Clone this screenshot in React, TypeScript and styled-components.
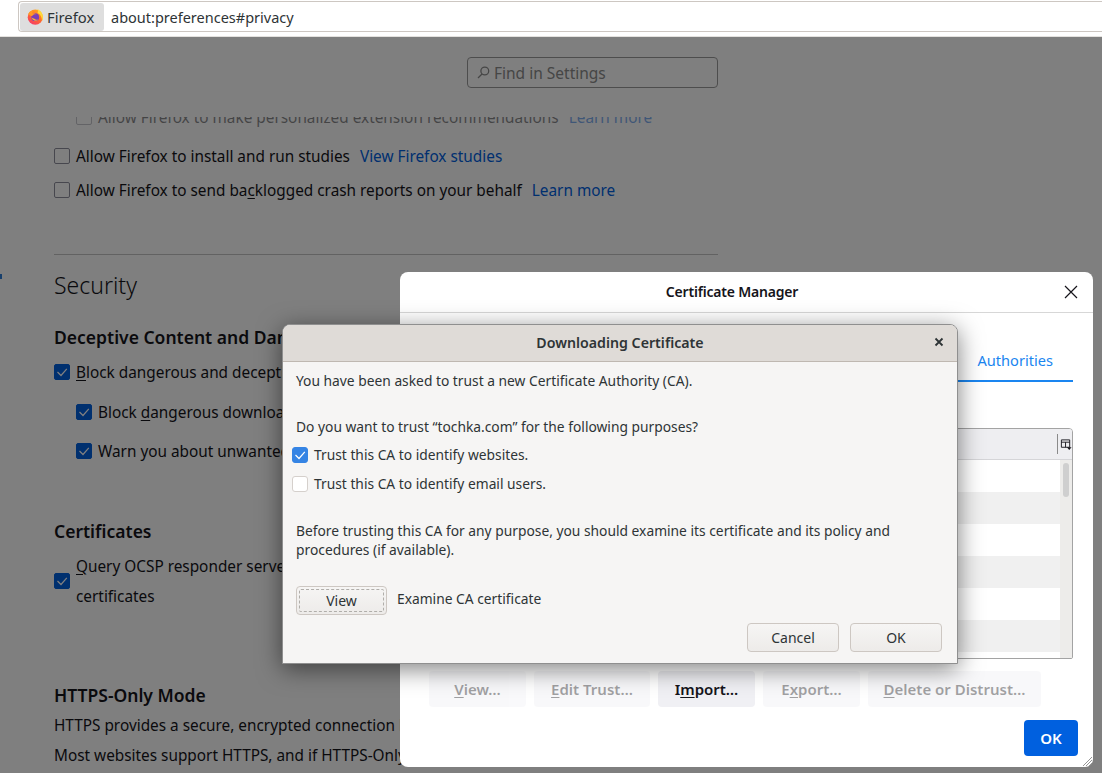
import React from "react";
import styled, { createGlobalStyle } from "styled-components";

const FONT = `"Noto Sans", "Open Sans", sans-serif`;

const Global = createGlobalStyle`
  html, body { margin: 0; padding: 0; width: 1102px; height: 773px; overflow: hidden; background: #fff; }
  body { font-family: ${FONT}; }
  * { box-sizing: border-box; }
`;

const Screen = styled.div`
  position: relative;
  width: 1102px;
  height: 773px;
  display: flex;
  flex-direction: column;
  overflow: hidden;
`;

/* ---------- address bar ---------- */
const UrlBar = styled.header`
  height: 37px;
  flex: none;
  padding: 1px 0 0 18px;
  background: #fff;
  border-bottom: 1px solid #e4e2df;
`;
const UrlField = styled.div`
  height: 31px;
  display: flex;
  align-items: center;
  gap: 7px;
  padding-left: 1px;
  border: 1px solid #cdc7c2;
  border-right: none;
  border-radius: 4px 0 0 4px;
`;
const Identity = styled.div`
  width: 84px;
  height: 28px;
  display: flex;
  align-items: center;
  gap: 3px;
  padding-left: 7px;
  border-radius: 3px;
  background: #dedede;
  font-size: 14.8px;
  color: #2e3436;
`;
const UrlText = styled.span`
  font-size: 14.5px;
  color: #2e3436;
`;

/* ---------- preferences page ---------- */
const Page = styled.main`
  position: relative;
  flex: 1;
  min-height: 0;
  display: flex;
  flex-direction: column;
  padding-left: 54px;
  background: #fff;
  color: #15141a;
  font-size: 15.35px;
`;
const SearchRow = styled.div`
  width: 664px;
  height: 80px;
  flex: none;
  padding-top: 20px;
  display: flex;
  justify-content: flex-end;
`;
const SearchBox = styled.div`
  width: 251px;
  height: 31px;
  display: flex;
  align-items: center;
  gap: 4px;
  padding-left: 9px;
  border: 1px solid #9a9a9a;
  border-radius: 4px;
  color: #8c8c8c;
  font-size: 15.5px;
`;
const Scroller = styled.div`
  width: 664px;
  flex: 1;
  min-height: 0;
  overflow: hidden;
`;
const Row = styled.div<{ $top: number; $indent?: boolean; $dim?: boolean; $h?: number }>`
  display: flex;
  align-items: center;
  gap: 6px;
  height: ${(p) => p.$h ?? 24}px;
  margin-top: ${(p) => p.$top}px;
  padding-left: ${(p) => (p.$indent ? 22 : 0)}px;
  white-space: nowrap;
  line-height: 30px;
  opacity: ${(p) => (p.$dim ? 0.5 : 1)};
`;
const Box = styled.span<{ $on?: boolean }>`
  width: 16px;
  height: 16px;
  flex: none;
  display: inline-flex;
  border-radius: 2px;
  border: 1px solid ${(p) => (p.$on ? "#0060df" : "#8f8f9d")};
  background: ${(p) => (p.$on ? "#0060df" : "transparent")};
`;
const Link = styled.span`
  color: #0060df;
  margin-left: 4px;
`;
const Key = styled.span`
  text-decoration: underline;
  text-underline-offset: 2px;
`;
const Rule = styled.hr<{ $top: number }>`
  margin: ${(p) => p.$top}px 0 0;
  border: none;
  height: 1px;
  background: #c4c4c4;
`;
const SectionTitle = styled.h1<{ $top: number }>`
  margin: ${(p) => p.$top}px 0 0;
  height: 34px;
  line-height: 34px;
  font-size: 23px;
  font-weight: 300;
`;
const GroupTitle = styled.h2<{ $top: number }>`
  margin: ${(p) => p.$top}px 0 0;
  height: 24px;
  line-height: 24px;
  font-size: 17.5px;
  font-weight: 600;
  white-space: nowrap;
`;
const Sidebar = styled.i`
  position: absolute;
  left: 0;
  top: 237px;
  width: 2px;
  height: 5px;
  background: #2f7fd8;
`;
const Scrim = styled.div`
  position: absolute;
  inset: 0;
  background: rgba(0, 0, 0, 0.5);
`;

/* ---------- certificate manager ---------- */
const Manager = styled.section`
  position: absolute;
  left: 400px;
  top: 272px;
  width: 693px;
  height: 495px;
  display: flex;
  flex-direction: column;
  background: #fff;
  border-radius: 8px;
  color: #15141a;
  font-size: 15px;
`;
const ManagerHead = styled.div`
  position: relative;
  height: 41px;
  flex: none;
  display: flex;
  align-items: center;
  justify-content: center;
  padding: 0 29px 2px 0;
  border-bottom: 1px solid #d7d7d7;
  font-size: 14px;
  letter-spacing: -0.2px;
  font-weight: 600;
`;
const CloseButton = styled.span`
  position: absolute;
  right: 14px;
  top: 12px;
  display: flex;
`;
const ManagerBody = styled.div`
  flex: 1;
  display: flex;
  flex-direction: column;
  padding: 0 20px 0 29px;
`;
const Tabs = styled.div`
  margin-top: 27px;
  height: 42px;
  display: flex;
  justify-content: flex-end;
  border-bottom: 2px solid #1a85f0;
`;
const Tab = styled.div`
  padding: 0 20px;
  line-height: 40px;
  font-size: 14.6px;
  color: #1a85f0;
`;
const Table = styled.div`
  margin-top: 46px;
  height: 231px;
  display: flex;
  flex-direction: column;
  border: 1px solid #a3a3a3;
  border-radius: 4px 4px 2px 2px;
  overflow: hidden;
`;
const TableHead = styled.div`
  height: 31px;
  flex: none;
  display: flex;
  align-items: center;
  justify-content: flex-end;
  gap: 2px;
  background: #eeeef1;
  border-bottom: 1px solid #d5d5d8;
`;
const HeadDivider = styled.span`
  width: 1px;
  height: 20px;
  background: #8a8a8a;
`;
const TableBody = styled.div`
  flex: 1;
  min-height: 0;
  display: flex;
`;
const RowList = styled.div`
  flex: 1;
  overflow: hidden;
`;
const Stripe = styled.div<{ $even: boolean }>`
  height: 32px;
  background: ${(p) => (p.$even ? "#f0f0f0" : "#fff")};
`;
const Scrollbar = styled.div`
  width: 12px;
  flex: none;
  padding: 3px 3px;
  background: #edecea;
`;
const Thumb = styled.div`
  width: 6px;
  height: 34px;
  border-radius: 3px;
  background: #cfcfcf;
`;
const Actions = styled.div`
  margin-top: 12px;
  display: flex;
  gap: 8px;
`;
const ActionButton = styled.div<{ $w: number; $off?: boolean }>`
  width: ${(p) => p.$w}px;
  height: 36px;
  display: flex;
  align-items: center;
  justify-content: center;
  border-radius: 4px;
  background: #f0f0f4;
  font-size: 15px;
  font-weight: 600;
  opacity: ${(p) => (p.$off ? 0.4 : 1)};
`;
const ManagerFoot = styled.div`
  margin: 13px -5px 0 0;
  display: flex;
  justify-content: flex-end;
`;
const Primary = styled.div`
  width: 54px;
  height: 36px;
  display: flex;
  align-items: center;
  justify-content: center;
  border-radius: 4px;
  background: #0060df;
  color: #fff;
  font-size: 15px;
  font-weight: 600;
`;
const Resizer = styled.svg`
  position: absolute;
  right: 0;
  bottom: 0;
`;

/* ---------- GTK prompt ---------- */
const Prompt = styled.section`
  position: absolute;
  left: 282px;
  top: 324px;
  width: 676px;
  height: 340px;
  display: flex;
  flex-direction: column;
  background: #f6f5f4;
  border: 1px solid #8f8f8f;
  border-radius: 8px 8px 0 0;
  box-shadow: 0 5px 24px rgba(0, 0, 0, 0.5);
  color: #2e3436;
  font-size: 13.8px;
`;
const PromptHead = styled.div`
  position: relative;
  height: 37px;
  flex: none;
  display: flex;
  align-items: center;
  justify-content: center;
  padding-bottom: 2px;
  background: #dfdbd7;
  border-bottom: 1px solid #bfb8b1;
  border-radius: 7px 7px 0 0;
  font-weight: 600;
  font-size: 14.2px;
`;
const PromptClose = styled.span`
  position: absolute;
  right: 13px;
  top: 12px;
  display: flex;
`;
const PromptBody = styled.div`
  flex: 1;
  display: flex;
  flex-direction: column;
  padding: 9px 15px 0 13px;
`;
const Para = styled.p<{ $top?: number }>`
  margin: ${(p) => p.$top ?? 0}px 0 0;
  line-height: 19px;
`;
const CheckRow = styled.div<{ $top?: number }>`
  margin: ${(p) => p.$top ?? 0}px 0 0 -4px;
  height: 29px;
  display: flex;
  align-items: center;
  gap: 6px;
`;
const GtkBox = styled.span<{ $on?: boolean }>`
  width: 16px;
  height: 16px;
  flex: none;
  display: inline-flex;
  border-radius: 3px;
  border: 1px solid ${(p) => (p.$on ? "#3584e4" : "#d5d0cc")};
  background: ${(p) => (p.$on ? "#3584e4" : "#fff")};
`;
const ViewRow = styled.div`
  margin-top: 27px;
  display: flex;
  align-items: center;
  gap: 10px;
`;
const GtkButton = styled.div<{ $w: number; $h: number }>`
  width: ${(p) => p.$w}px;
  height: ${(p) => p.$h}px;
  display: flex;
  align-items: center;
  justify-content: center;
  border: 1px solid #cdc7c2;
  border-radius: 4px;
  background: linear-gradient(#f6f5f4, #edebe9);
  font-size: 14px;
`;
const FocusRing = styled.span`
  width: 85px;
  height: 23px;
  display: flex;
  align-items: center;
  justify-content: center;
  border: 1px dashed #b0aeaa;
  border-radius: 2px;
`;
const ViewNote = styled.span`
  margin-top: -5px;
`;
const PromptFoot = styled.div`
  margin-top: 8px;
  display: flex;
  justify-content: flex-end;
  gap: 11px;
`;

const Check = () => (
  <svg width="14" height="14" viewBox="0 0 14 14" fill="none">
    <path d="M2.5 7 L6 10.5 L11.8 3.8" stroke="#fff" strokeWidth={1.2} />
  </svg>
);

const FirefoxLogo = () => (
  <svg width="17" height="17" viewBox="0 0 17 17">
    <defs>
      <linearGradient id="ffBody" x1="0.8" y1="0" x2="0.2" y2="1">
        <stop offset="0" stopColor="#ffb01f" />
        <stop offset="0.5" stopColor="#ff6a2b" />
        <stop offset="1" stopColor="#f5366f" />
      </linearGradient>
    </defs>
    <circle cx="8.3" cy="9.2" r="7.6" fill="url(#ffBody)" />
    <path d="M10.5 1 C13.5 2.5 16 5.5 16 9.5 C16 11 15.5 12 15 12.8 C15 8.5 13 6 10.5 5 C11.3 3.8 11 2 10.5 1 Z" fill="#ffd93b" />
    <circle cx="8.2" cy="9.2" r="3.9" fill="#7a3fb8" />
    <path d="M1.2 6 C2.5 3.6 4.6 2.4 6.8 2.6 C5.6 3.4 5.2 4.4 5.5 5.4 C7 5 8.2 5.4 9.2 6.4 C7.5 6 6 6.6 5.2 8 C4 8 2.6 7.4 1.2 6 Z" fill="#ff9a26" />
    <path d="M4.4 9.2 C5.2 12.4 8.8 13.6 11.4 11.8 C10 11.8 8.4 11.6 7 10.4 C6 10.4 5.2 10 4.4 9.2 Z" fill="#ffb52e" />
  </svg>
);

const SearchGlyph = () => (
  <svg width="13" height="13" viewBox="0 0 13 13" fill="none" stroke="#8c8c8c" strokeWidth="1.3">
    <circle cx="7.8" cy="5" r="3.9" />
    <path d="M5 8 L1 12" />
  </svg>
);

const stripes = [0, 1, 2, 3, 4, 5, 6];

export default function App() {
  return (
    <Screen>
      <Global />
      <UrlBar>
        <UrlField>
          <Identity>
            <FirefoxLogo />
            Firefox
          </Identity>
          <UrlText>about:preferences#privacy</UrlText>
        </UrlField>
      </UrlBar>

      <Page>
        <SearchRow>
          <SearchBox>
            <SearchGlyph />
            Find in Settings
          </SearchBox>
        </SearchRow>
        <Scroller>
          <Row $top={-12} $indent $dim>
            <Box />
            <span>Allow Firefox to make personalized extension recommendations</span>
            <Link>Learn more</Link>
          </Row>
          <Row $top={15}>
            <Box />
            <span>Allow Firefox to install and run studies</span>
            <Link>View Firefox studies</Link>
          </Row>
          <Row $top={10}>
            <Box />
            <span>
              Allow Firefox to send ba<Key>c</Key>klogged crash reports on your behalf
            </span>
            <Link>Learn more</Link>
          </Row>
          <Rule $top={52} />
          <SectionTitle $top={13}>Security</SectionTitle>
          <GroupTitle $top={23}>Deceptive Content and Dangerous Software Protection</GroupTitle>
          <Row $top={11}>
            <Box $on>
              <Check />
            </Box>
            <span>
              <Key>B</Key>lock dangerous and deceptive content
            </span>
          </Row>
          <Row $top={16} $indent>
            <Box $on>
              <Check />
            </Box>
            <span>
              Block <Key>d</Key>angerous downloads
            </span>
          </Row>
          <Row $top={15} $indent>
            <Box $on>
              <Check />
            </Box>
            <span>Warn you about unwanted and uncommon software</span>
          </Row>
          <GroupTitle $top={56}>Certificates</GroupTitle>
          <Row $top={8} $h={60}>
            <Box $on>
              <Check />
            </Box>
            <span>
              <Key>Q</Key>uery OCSP responder servers to confirm the current validity of
              <br />
              certificates
            </span>
          </Row>
          <GroupTitle $top={72}>HTTPS-Only Mode</GroupTitle>
          <Row $top={6}>
            <span>HTTPS provides a secure, encrypted connection between Firefox and the websites you visit.</span>
          </Row>
          <Row $top={6}>
            <span>Most websites support HTTPS, and if HTTPS-Only Mode is enabled, then Firefox will upgrade</span>
          </Row>
        </Scroller>
        <Sidebar />
        <Scrim />
      </Page>

      <Manager>
        <ManagerHead>
          Certificate Manager
          <CloseButton>
            <svg width="16" height="16" viewBox="0 0 16 16" stroke="#15141a" strokeWidth="1.2">
              <path d="M2 2 L14 14 M14 2 L2 14" />
            </svg>
          </CloseButton>
        </ManagerHead>
        <ManagerBody>
          <Tabs>
            <Tab>Authorities</Tab>
          </Tabs>
          <Table>
            <TableHead>
              <HeadDivider />
              <svg width="12" height="13" viewBox="0 0 13 13" fill="none">
                <path d="M1.5 1.5 H10.5 V9.5 H1.5 Z M1.5 4 H10.5 M6 4 V9.5" stroke="#15141a" strokeWidth="1" />
                <path d="M7.5 9.5 H12.5 L10 12.5 Z" fill="#15141a" />
              </svg>
            </TableHead>
            <TableBody>
              <RowList>
                {stripes.map((i) => (
                  <Stripe key={i} $even={i % 2 === 1} />
                ))}
              </RowList>
              <Scrollbar>
                <Thumb />
              </Scrollbar>
            </TableBody>
          </Table>
          <Actions>
            <ActionButton $w={97} $off>
              <span>
                <Key>V</Key>iew…
              </span>
            </ActionButton>
            <ActionButton $w={116} $off>
              <span>
                <Key>E</Key>dit Trust…
              </span>
            </ActionButton>
            <ActionButton $w={97}>
              <span>
                I<Key>m</Key>port…
              </span>
            </ActionButton>
            <ActionButton $w={97} $off>
              <span>
                E<Key>x</Key>port…
              </span>
            </ActionButton>
            <ActionButton $w={173} $off>
              <span>
                <Key>D</Key>elete or Distrust…
              </span>
            </ActionButton>
          </Actions>
          <ManagerFoot>
            <Primary>OK</Primary>
          </ManagerFoot>
        </ManagerBody>
        <Resizer width="11" height="11" viewBox="0 0 11 11" stroke="#8a8a8a" strokeWidth="0.9">
          <path d="M10 1 L1 10 M10 4 L4 10 M10 7 L7 10" />
        </Resizer>
      </Manager>

      <Prompt>
        <PromptHead>
          Downloading Certificate
          <PromptClose>
            <svg width="10" height="10" viewBox="0 0 10 10" stroke="#2e3436" strokeWidth="1.8">
              <path d="M1.5 1.5 L8.5 8.5 M8.5 1.5 L1.5 8.5" />
            </svg>
          </PromptClose>
        </PromptHead>
        <PromptBody>
          <Para>You have been asked to trust a new Certificate Authority (CA).</Para>
          <Para $top={27}>Do you want to trust “tochka.com” for the following purposes?</Para>
          <CheckRow $top={4}>
            <GtkBox $on>
              <Check />
            </GtkBox>
            Trust this CA to identify websites.
          </CheckRow>
          <CheckRow>
            <GtkBox />
            Trust this CA to identify email users.
          </CheckRow>
          <Para $top={23}>
            Before trusting this CA for any purpose, you should examine its certificate and its policy and
            <br />
            procedures (if available).
          </Para>
          <ViewRow>
            <GtkButton $w={91} $h={29}>
              <FocusRing>View</FocusRing>
            </GtkButton>
            <ViewNote>Examine CA certificate</ViewNote>
          </ViewRow>
          <PromptFoot>
            <GtkButton $w={92} $h={29}>
              Cancel
            </GtkButton>
            <GtkButton $w={92} $h={29}>
              OK
            </GtkButton>
          </PromptFoot>
        </PromptBody>
      </Prompt>
    </Screen>
  );
}
